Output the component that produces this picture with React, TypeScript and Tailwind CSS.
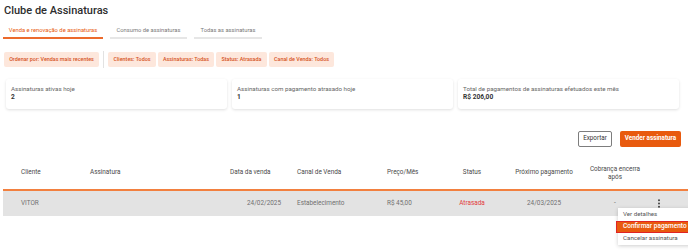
const tabs = [
  { label: 'Venda e renovação de assinaturas', w: 'w-[100px]', active: true },
  { label: 'Consumo de assinaturas', w: 'w-[77px]', active: false },
  { label: 'Todas as assinaturas', w: 'w-[68px]', active: false },
];

const filters = [
  { label: 'Clientes: Todos', w: 'w-[48px]' },
  { label: 'Assinaturas: Todas', w: 'w-[56px]' },
  { label: 'Status: Atrasada', w: 'w-[51px]' },
  { label: 'Canal de Venda: Todos', w: 'w-[65px]' },
];

const cards = [
  { label: 'Assinaturas ativas hoje', value: '2' },
  { label: 'Assinaturas com pagamento atrasado hoje', value: '1' },
  { label: 'Total de pagamentos de assinaturas efetuados este mês', value: 'R$ 206,00' },
];

function Kebab() {
  return (
    <svg width="4" height="9" viewBox="0 0 4 9" className="text-[#444]">
      <circle cx="2" cy="1.2" r="1" fill="currentColor" />
      <circle cx="2" cy="4.5" r="1" fill="currentColor" />
      <circle cx="2" cy="7.8" r="1" fill="currentColor" />
    </svg>
  );
}

export default function App() {
  return (
    <div className="w-[688px] h-[252px] overflow-hidden bg-white font-['Roboto',sans-serif] text-[#333]">
      <div className="pl-[4px]">
        <h1 className="mt-[4px] h-[13px] text-[11px] leading-[13px] font-medium text-[#2e2e2e]">Clube de Assinaturas</h1>

        {/* tabs */}
        <div className="mt-[8px] flex gap-[7px] -ml-[1px]">
          {tabs.map((t) => (
            <div
              key={t.label}
              className={`${t.w} h-[14px] flex items-center justify-center text-[5.8px] leading-none border-b-2 ${
                t.active ? 'border-[#ec6a2c] text-[#e8590c]' : 'border-[#e6e6e6] text-[#7a7a7a]'
              }`}
            >
              {t.label}
            </div>
          ))}
        </div>

        {/* filters */}
        <div className="mt-[12px] h-[17px] flex items-center">
          <span className="w-[95px] h-[15px] flex items-center justify-center rounded-[2px] bg-[#fde7dc] text-[#d6531d] text-[5.4px] font-medium">
            Ordenar por: Vendas mais recentes
          </span>
          <span className="ml-[4px] mr-[4px] w-px h-[17px] bg-[#e2e2e2]" />
          <div className="flex gap-[2px]">
            {filters.map((f) => (
              <span
                key={f.label}
                className={`${f.w} h-[15px] flex items-center justify-center rounded-[2px] bg-[#fde7dc] text-[#d6531d] text-[5.4px] font-medium`}
              >
                {f.label}
              </span>
            ))}
          </div>
        </div>

        {/* summary cards */}
        <div className="mt-[11px] ml-[2px] flex gap-[5px]">
          {cards.map((c) => (
            <div
              key={c.label}
              className="w-[221px] h-[30px] rounded-[3px] bg-white shadow-[0_1px_3px_rgba(0,0,0,0.13)] pl-[5px] pt-[6px]"
            >
              <div className="text-[6.2px] leading-[8px] text-[#666]">{c.label}</div>
              <div className="text-[6.6px] leading-[9px] font-bold text-[#333]">{c.value}</div>
            </div>
          ))}
        </div>
      </div>

      {/* actions */}
      <div className="mt-[22px] flex justify-end gap-[8px] pr-[7px]">
        <button className="w-[34px] h-[16px] border border-[#7d7d7d] rounded-[2px] bg-white text-[6.3px] text-[#333]">
          Exportar
        </button>
        <button className="w-[61px] h-[16px] rounded-[2px] bg-[#e85a0e] text-[6.3px] font-bold text-white">
          Vender assinatura
        </button>
      </div>

      {/* table */}
      <div className="mt-[10px] ml-[3px] relative">
        <div className="h-[34px] flex items-center text-[6.4px] text-[#4a4a4a] border-b-2 border-[#f2803f]">
          <div className="w-[87px] pl-[18px]">Cliente</div>
          <div className="w-[138px]">Assinatura</div>
          <div className="w-[67px] pl-[2px]">Data da venda</div>
          <div className="w-[89px] pl-[2px]">Canal de Venda</div>
          <div className="w-[56px] pl-[3px]">Preço/Mês</div>
          <div className="w-[64px] text-center">Status</div>
          <div className="w-[80px] text-center">Próximo pagamento</div>
          <div className="w-[62px] text-center leading-[8.5px]">
            Cobrança encerra
            <br />
            após
          </div>
        </div>
        <div className="h-[25px] flex items-center bg-[#e3e3e3] text-[6.4px] text-[#707070]">
          <div className="w-[87px] pl-[18px]">VITOR</div>
          <div className="w-[138px]" />
          <div className="w-[67px] pl-[19px]">24/02/2025</div>
          <div className="w-[89px] pl-[2px]">Estabelecimento</div>
          <div className="w-[56px] pl-[3px]">R$ 45,00</div>
          <div className="w-[64px] text-center text-[#e23b3b]">Atrasada</div>
          <div className="w-[80px] text-center">24/03/2025</div>
          <div className="w-[62px] text-center">-</div>
          <div className="w-[26px] flex justify-center">
            <Kebab />
          </div>
        </div>

        {/* dropdown menu */}
        <div className="absolute left-[615px] top-[51px] w-[80px] bg-white shadow-[0_1px_4px_rgba(0,0,0,0.2)] text-[6.2px] text-[#555]">
          <div className="h-[13px] flex items-center pl-[5px]">Ver detalhes</div>
          <div className="h-[12px] -ml-[2px] flex items-center pl-[6px] bg-[#e85a0e] text-white font-medium text-[6.5px] border border-[#e02424]">
            Confirmar pagamento
          </div>
          <div className="h-[12px] flex items-center pl-[5px]">Cancelar assinatura</div>
        </div>
      </div>
    </div>
  );
}
